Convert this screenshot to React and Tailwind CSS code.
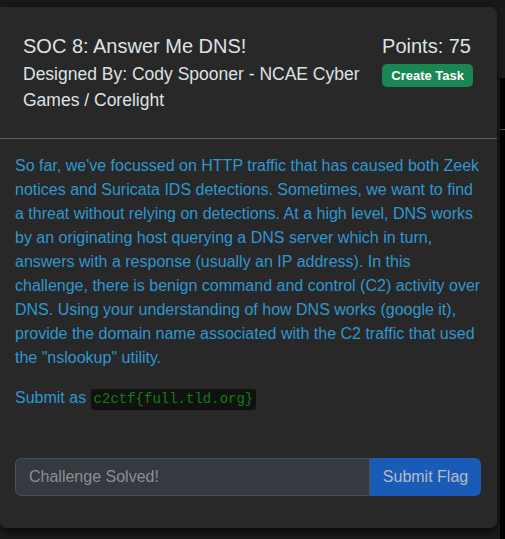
export default function App() {
  return (
    <div
      className="relative w-[505px] h-[539px] overflow-hidden flex bg-[#181818]"
      style={{ fontFamily: '"Liberation Sans", Arial, sans-serif' }}
    >
      {/* page behind the modal */}
      <div className="w-[500px] mt-[7px] bg-[#1b1b1b]" />
      <div className="flex-1 flex flex-col mt-[7px]">
        <div className="h-[71px] bg-[#1c1c1c]" />
        <div className="flex-1 bg-black">
          <div className="mt-[51px] h-px bg-[#5a5a5a]" />
        </div>
      </div>

      {/* modal */}
      <div className="absolute left-0 top-[7px] w-[497px] h-[521px] bg-[#282828] rounded-r-[7px] rounded-bl-[6px] shadow-[0_4px_8px_rgba(0,0,0,0.6)] flex flex-col">
        <div className="flex justify-between pl-[23px] pr-[24px] pt-[27px] pb-[25px] border-b border-[#545b64]">
          <div className="w-[352px]">
            <h5 className="text-[20px] leading-[24px] text-[#dee2e6]">SOC 8: Answer Me DNS!</h5>
            <p className="mt-[3px] text-[17.5px] leading-[26px] text-[#dee2e6]">
              Designed By: Cody Spooner - NCAE Cyber Games / Corelight
            </p>
          </div>
          <div className="flex flex-col items-end">
            <span className="text-[20px] leading-[24px] text-[#dee2e6] mr-[2px]">Points: 75</span>
            <span className="mt-[6px] h-[23px] px-[9px] rounded-[5px] bg-[#198754] text-white text-[13px] font-bold leading-[23px]">
              Create Task
            </span>
          </div>
        </div>

        <div className="px-[15px] pt-[15px] text-[16px] leading-[24px] text-[#2e97d0]">
          <p>
            So far, we've focussed on HTTP traffic that has caused both Zeek notices and Suricata IDS
            detections. Sometimes, we want to find a threat without relying on detections. At a high
            level, DNS works by an originating host querying a DNS server which in turn, answers with a
            response (usually an IP address). In this challenge, there is benign command and control (C2)
            activity over DNS. Using your understanding of how DNS works (google it), provide the domain
            name associated with the C2 traffic that used the "nslookup" utility.
          </p>
          <p className="mt-[16px]">
            Submit as{" "}
            <code
              className="inline-block px-[3px] rounded-[3px] bg-[#111111] text-[#0f7f0f] text-[14px] leading-[21px]"
              style={{ fontFamily: '"Liberation Mono", "Courier New", monospace' }}
            >
              c2ctf{"{"}full.tld.org{"}"}
            </code>
          </p>

          <div className="mt-[48px] flex w-[466px] h-[38px]">
            <input
              disabled
              placeholder="Challenge Solved!"
              className="flex-1 min-w-0 h-full px-[13px] bg-[#343a40] border border-[#4a5058] rounded-l-[6px] text-[16px] placeholder:text-[#8a8f95] outline-none"
            />
            <button className="w-[111px] h-full bg-[#1a5bb8] rounded-r-[6px] text-[16px] text-[#b4bcc6]">
              Submit Flag
            </button>
          </div>
        </div>
      </div>
    </div>
  );
}
